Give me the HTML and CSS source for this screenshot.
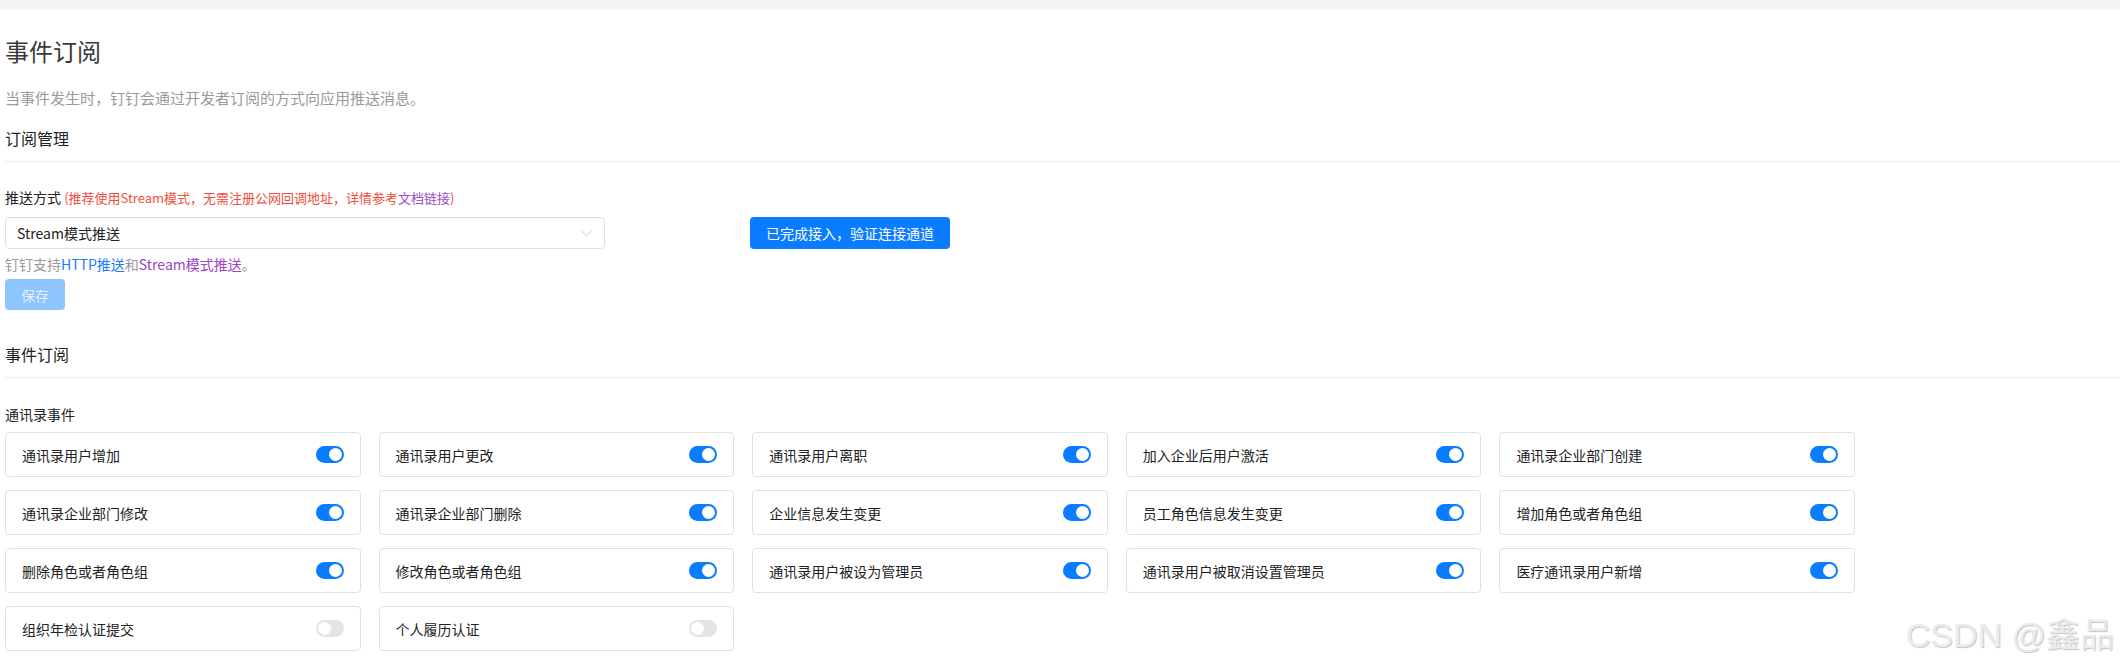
FILE: index.html
```html
<!DOCTYPE html>
<html lang="zh-CN">
<head>
<meta charset="utf-8">
<title>事件订阅</title>
<link rel="stylesheet" href="styles.css">
</head>
<body>
<div class="topbar"></div>
<main class="page">
  <h1 class="title">事件订阅</h1>
  <p class="subtitle">当事件发生时，钉钉会通过开发者订阅的方式向应用推送消息。</p>

  <h2 class="section-head">订阅管理</h2>
  <div class="form-label">推送方式 <span class="hint">(推荐使用Stream模式，无需注册公网回调地址，详情参考<span class="hint-link">文档链接</span>)</span></div>
  <div class="form-row">
    <div class="select">
      <span>Stream模式推送</span>
      <svg class="chevron" width="11" height="7" viewBox="0 0 11 7"><path d="M0.5 0.8 L5.5 5.8 L10.5 0.8" fill="none" stroke="#c8c8c8" stroke-width="1"/></svg>
    </div>
    <button class="btn-primary">已完成接入，验证连接通道</button>
  </div>
  <div class="help">钉钉支持<span class="link-blue">HTTP推送</span>和<span class="link-purple">Stream模式推送</span>。</div>
  <button class="btn-save">保存</button>

  <h2 class="section-head second">事件订阅</h2>
  <div class="group-label">通讯录事件</div>
  <div class="cards">
    <div class="card"><span>通讯录用户增加</span><i class="switch on"></i></div>
    <div class="card"><span>通讯录用户更改</span><i class="switch on"></i></div>
    <div class="card"><span>通讯录用户离职</span><i class="switch on"></i></div>
    <div class="card"><span>加入企业后用户激活</span><i class="switch on"></i></div>
    <div class="card"><span>通讯录企业部门创建</span><i class="switch on"></i></div>
    <div class="card"><span>通讯录企业部门修改</span><i class="switch on"></i></div>
    <div class="card"><span>通讯录企业部门删除</span><i class="switch on"></i></div>
    <div class="card"><span>企业信息发生变更</span><i class="switch on"></i></div>
    <div class="card"><span>员工角色信息发生变更</span><i class="switch on"></i></div>
    <div class="card"><span>增加角色或者角色组</span><i class="switch on"></i></div>
    <div class="card"><span>删除角色或者角色组</span><i class="switch on"></i></div>
    <div class="card"><span>修改角色或者角色组</span><i class="switch on"></i></div>
    <div class="card"><span>通讯录用户被设为管理员</span><i class="switch on"></i></div>
    <div class="card"><span>通讯录用户被取消设置管理员</span><i class="switch on"></i></div>
    <div class="card"><span>医疗通讯录用户新增</span><i class="switch on"></i></div>
    <div class="card"><span>组织年检认证提交</span><i class="switch off"></i></div>
    <div class="card"><span>个人履历认证</span><i class="switch off"></i></div>
  </div>
</main>
<div class="watermark">CSDN @鑫品</div>
</body>
</html>
```

FILE: styles.css
```css
html, body {
  margin: 0;
  padding: 0;
  background: #ffffff;
}
body {
  font-family: "Noto Sans CJK SC", "Noto Sans", sans-serif;
  color: #333333;
  width: 2120px;
  height: 667px;
  overflow: hidden;
  position: relative;
}
.topbar {
  height: 9px;
  background: #f4f5f7;
}
.page {
  padding-left: 5px;
}
.title {
  margin: 26px 0 0 0;
  font-size: 24px;
  line-height: 32px;
  font-weight: 400;
  color: #3a3a3a;
}
.subtitle {
  margin: 21px 0 0 0;
  font-size: 15px;
  line-height: 20px;
  color: #9a9a9a;
}
.section-head {
  margin: 19px 0 0 0;
  font-size: 16px;
  line-height: 22px;
  font-weight: 400;
  color: #222;
  padding-bottom: 12px;
  border-bottom: 1px solid #ebebeb;
}
.section-head.second {
  margin-top: 33px;
}
.form-label {
  margin-top: 25px;
  font-size: 14px;
  line-height: 20px;
  color: #222;
}
.hint {
  font-size: 13px;
  color: #f04e3b;
}
.hint-link {
  color: #9a4bc8;
}
.form-row {
  margin-top: 9px;
  display: flex;
  align-items: center;
  gap: 145px;
}
.select {
  box-sizing: border-box;
  width: 600px;
  height: 32px;
  border: 1px solid #dedede;
  border-radius: 4px;
  padding: 0 12px 0 11px;
  display: flex;
  align-items: center;
  justify-content: space-between;
  font-size: 14px;
  color: #222;
}
.btn-primary {
  box-sizing: border-box;
  height: 32px;
  width: 200px;
  border: none;
  border-radius: 4px;
  background: #0a7cff;
  color: #ffffff;
  font-family: inherit;
  font-size: 14px;
  padding: 0;
}
.help {
  margin-top: 5px;
  font-size: 14px;
  line-height: 20px;
  color: #999;
}
.link-blue { color: #1a7bff; }
.link-purple { color: #9a45c4; }
.btn-save {
  display: block;
  margin-top: 5px;
  box-sizing: border-box;
  width: 60px;
  height: 31px;
  border: none;
  border-radius: 4px;
  background: #8ec5ff;
  color: #e3f0ff;
  font-family: inherit;
  font-size: 14px;
  padding: 0;
}
.group-label {
  margin-top: 26px;
  font-size: 14px;
  line-height: 20px;
  color: #222;
}
.cards {
  margin-top: 8px;
  display: grid;
  grid-template-columns: repeat(5, 355.6px);
  column-gap: 18px;
  row-gap: 13px;
}
.card {
  box-sizing: border-box;
  height: 45px;
  border: 1px solid #e1e1e1;
  border-radius: 4px;
  padding: 0 16px 0 16px;
  display: flex;
  align-items: center;
  justify-content: space-between;
  font-size: 14px;
  color: #222;
}
.switch {
  position: relative;
  width: 28px;
  height: 17px;
  border-radius: 9px;
  display: block;
}
.switch::after {
  content: "";
  position: absolute;
  top: 2px;
  width: 13px;
  height: 13px;
  border-radius: 50%;
  background: #ffffff;
}
.switch.on { background: #0a7cff; }
.switch.on::after { right: 2px; }
.switch.off { background: #e3e4e6; }
.switch.off::after { left: 2px; }
.watermark {
  position: absolute;
  right: 6px;
  bottom: 12px;
  font-family: "Liberation Sans", "Noto Sans CJK SC", sans-serif;
  font-size: 34px;
  line-height: 40px;
  font-weight: 400;
  color: #ebebeb;
  text-shadow: 1px 1px 1px #c4c4c4;
}
```
